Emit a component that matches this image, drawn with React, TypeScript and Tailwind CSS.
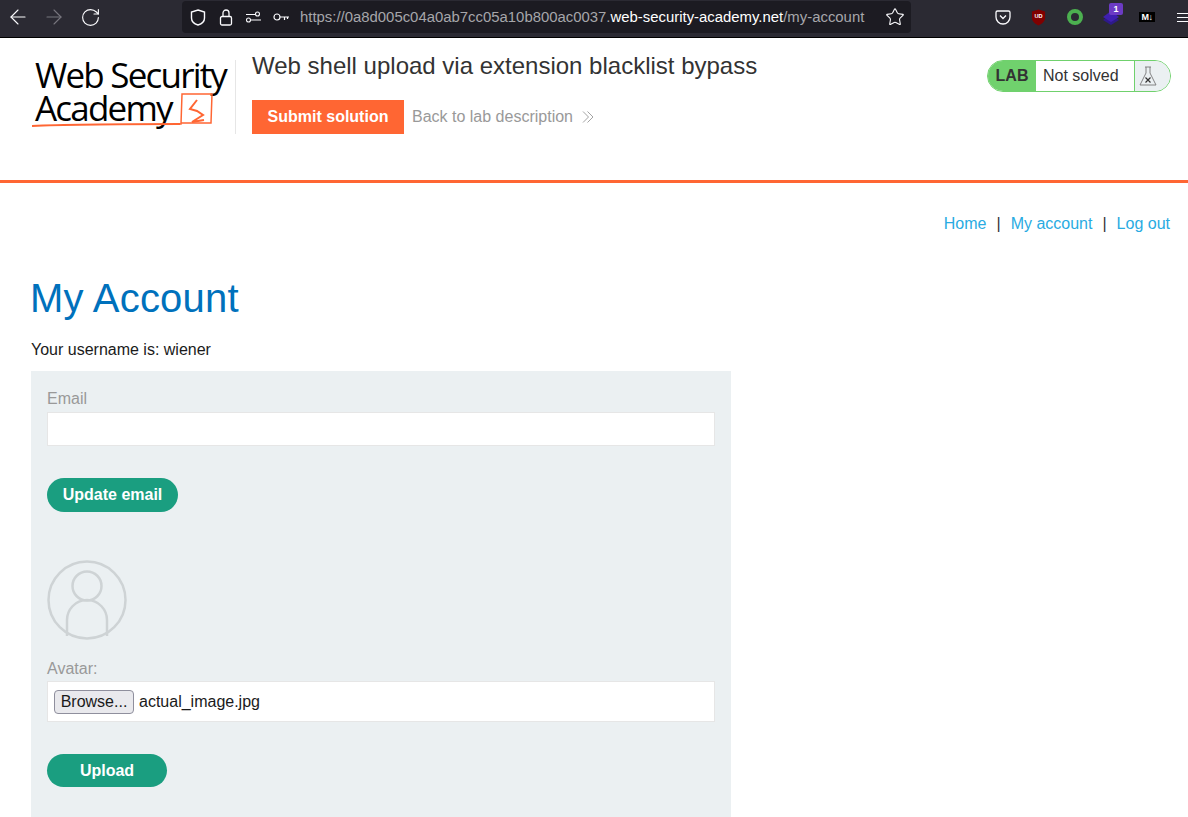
import { ArrowLeft, ArrowRight, RotateCw, Star } from 'lucide-react'

function BrowserBar() {
  return (
    <div className="flex h-[38px] items-center border-b border-black bg-[#2b2a33] pb-[3px]">
      <div className="flex w-[182px] items-center pl-[6px] text-[#fbfbfe]">
        <ArrowLeft size={24} strokeWidth={1.1} />
        <ArrowRight size={24} strokeWidth={1.1} className="ml-[12px] text-[#77767e]" />
        <RotateCw size={21} strokeWidth={1.3} className="ml-[14px]" />
      </div>
      <div className="flex h-[32px] w-[729px] items-center rounded-[4px] bg-[#1c1b22] pl-[8px] text-[#fbfbfe]">
        <svg viewBox="0 0 16 17" className="h-[17px] w-[16px]" fill="none" stroke="currentColor" strokeWidth="1.4">
          <path d="M8 1l6.500 2v6c0 3.500-2.500 5.800-6.500 7-4-1.200-6.500-3.500-6.500-7V3Z" />
        </svg>
        <svg viewBox="0 0 14 17" className="ml-[13px] h-[17px] w-[14px]" fill="none" stroke="currentColor" strokeWidth="1.3">
          <rect x="1.500" y="7.500" width="11" height="8.500" rx="1.500" />
          <path d="M4 7.500V4a3 3 0 0 1 6 0v3.500" />
        </svg>
        <svg viewBox="0 0 15 12" className="ml-[13px] h-[12px] w-[15px]" fill="none" stroke="currentColor" strokeWidth="1.1">
          <path d="M0 3.500h9M4.500 9H15" />
          <circle cx="11.500" cy="3" r="2" />
          <circle cx="2.500" cy="9" r="2" />
        </svg>
        <svg viewBox="0 0 16 10" className="ml-[12px] h-[10px] w-[16px]" fill="none" stroke="currentColor" strokeWidth="1.2">
          <circle cx="4" cy="5" r="3" />
          <path d="M7 5h9M11.500 5v3M14.500 5v2" />
        </svg>
        <div className="ml-[11px] whitespace-nowrap text-[14.9px] text-[#a6a6aa]">
          https://0a8d005c04a0ab7cc05a10b800ac0037.<span className="text-white">web-security-academy.net</span>/my-account
        </div>
        <Star size={20} strokeWidth={1.3} className="ml-auto mr-[6px]" />
      </div>
      <div className="flex flex-1 items-center text-[#fbfbfe]">
        <svg viewBox="0 0 16 16" className="ml-[84px] h-[16px] w-[16px]" fill="none" stroke="currentColor" strokeWidth="1.3">
          <path d="M2.500 2h11A1.500 1.500 0 0 1 15 3.500V8a7 7 0 0 1-14 0V3.500A1.500 1.500 0 0 1 2.500 2Z" />
          <path d="M5 6.500l3 3 3-3" />
        </svg>
        <svg viewBox="0 0 16 17" className="ml-[20px] h-[17px] w-[15px]">
          <path d="M8 0l7 2v7c0 3.500-3 6-7 8-4-2-7-4.500-7-8V2Z" fill="#800000" />
          <text x="8" y="9.500" textAnchor="middle" fontSize="6" fontWeight="700" fill="#fff" fontFamily="Liberation Sans">UD</text>
        </svg>
        <div className="ml-[21px] h-[16px] w-[16px] rounded-full border-[4px] border-[#4cb050]" />
        <div className="relative ml-[20px] h-[16px] w-[16px]">
          <svg viewBox="0 0 16 16" className="h-[16px] w-[16px]">
            <path d="M8 5l8 6-8 5-8-5Z" fill="#2e1a8a" />
            <path d="M8 2l8 6-8 5-8-5Z" fill="#3f1fb0" />
          </svg>
          <span className="absolute left-[6px] top-[-6px] flex h-[12px] w-[14px] items-center justify-center rounded-[2px] bg-[#6c3bc4] text-[9px] font-bold leading-none text-white">
            1
          </span>
        </div>
        <div className="ml-[20px] flex h-[10px] w-[16px] items-center justify-center bg-black text-[9px] font-bold leading-none tracking-[-0.5px] text-white">
          M↓
        </div>
        <div className="ml-[22px] flex w-[11px] shrink-0 flex-col gap-[3px]">
          <div className="h-px bg-[#fbfbfe]" />
          <div className="h-px bg-[#fbfbfe]" />
          <div className="h-px bg-[#fbfbfe]" />
        </div>
      </div>
    </div>
  )
}

function Logo() {
  return (
    <div className="relative h-[74px] w-[204px] font-['Open_Sans',sans-serif] font-medium text-black">
      <div className="mt-[-2px] whitespace-nowrap pl-[4px] text-[35px] leading-[33px] tracking-[-1.8px]">Web Security</div>
      <div className="whitespace-nowrap pl-[4px] text-[35px] leading-[33px] tracking-[-1.8px]">Academy</div>
      <svg viewBox="0 0 204 74" className="absolute left-0 top-0 h-[74px] w-[204px]" fill="none" stroke="#ff6633">
        <path d="M1 68c40-2 90-2 148-2" strokeWidth="2" />
        <path d="M147 66h3l1-30h30l-1 29h-30" strokeWidth="1.500" />
        <path d="M166 42l-7 9 7 2 6 4-11 7 12-2" strokeWidth="2" />
      </svg>
    </div>
  )
}

function LabBadge() {
  return (
    <div className="mt-[22px] flex h-[32px] w-[184px] overflow-hidden rounded-full border border-[#70d16d] text-[16px]">
      <div className="flex w-[48px] items-center justify-center bg-[#70d16d] font-bold text-[#333]">LAB</div>
      <div className="flex flex-1 items-center bg-white pl-[7px] text-[#333]">Not solved</div>
      <div className="flex w-[36px] items-center justify-center border-l border-[#70d16d] bg-[#ebf0f2] pr-[9px]">
        <svg viewBox="0 0 18 20" className="h-[20px] w-[18px]" fill="none" stroke="#777" strokeWidth="0.9">
          <path d="M6 1h6M7 1v6L1 19h16L11 7V1" />
          <path d="M6.500 11.500l5 5M11.500 11.500l-5 5" stroke="#333" strokeWidth="1.200" />
        </svg>
      </div>
    </div>
  )
}

function Header() {
  return (
    <header className="flex h-[145px] items-start justify-between border-b-[3px] border-[#ff6633] pl-[31px] pr-[17px]">
      <div className="flex items-start">
        <div className="mt-[22px] h-[74px] w-[205px] border-r border-[#e6e6e6]">
          <Logo />
        </div>
        <div className="ml-[16px] mt-[13px]">
          <h2 className="text-[24px] leading-[29px] text-[#333]">Web shell upload via extension blacklist bypass</h2>
          <div className="mt-[20px] flex items-center">
            <div className="flex h-[34px] w-[152px] items-center justify-center bg-[#ff6633] font-bold text-white">Submit solution</div>
            <span className="ml-[8px] text-[#999]">Back to lab description</span>
            <svg viewBox="0 0 12 12" className="ml-[9px] h-[12px] w-[12px]" fill="none" stroke="#999" strokeWidth="0.9">
              <path d="M1 .500L6.500 6 1 11.500M5.500 .500L11 6l-5.500 5.500" />
            </svg>
          </div>
        </div>
      </div>
      <LabBadge />
    </header>
  )
}

function GreenButton({ label, size }: { label: string; size: string }) {
  return <div className={`flex items-center justify-center rounded-full bg-[#1a9e80] font-bold text-white ${size}`}>{label}</div>
}

export default function App() {
  return (
    <div className="h-[817px] overflow-hidden bg-white font-['Liberation_Sans',Arial,sans-serif] text-[16px] text-[#1a1a1a]">
      <BrowserBar />
      <Header />
      <nav className="mt-[31px] flex justify-end gap-[10px] pr-[18px] leading-[20px] text-[#333]">
        <span className="text-[#29abe2]">Home</span>
        <span>|</span>
        <span className="text-[#29abe2]">My account</span>
        <span>|</span>
        <span className="text-[#29abe2]">Log out</span>
      </nav>
      <main className="pl-[31px]">
        <h1 className="ml-[-1px] mt-[40px] text-[40px] leading-[48px] tracking-[0.2px] text-[#0071bc]">My Account</h1>
        <p className="mt-[18px] leading-[19px]">Your username is: wiener</p>
        <div className="mt-[12px] h-[500px] w-[700px] bg-[#ebf0f2] px-[16px] pt-[19px]">
          <div className="leading-[18px] text-[#999]">Email</div>
          <div className="mt-[4px] h-[34px] w-[668px] border border-[#e6e6e6] bg-white" />
          <div className="mt-[32px]">
            <GreenButton label="Update email" size="h-[34px] w-[131px]" />
          </div>
          <svg viewBox="0 0 80 80" className="mt-[48px] h-[80px] w-[80px]" fill="none" stroke="#ced3d5" strokeWidth="2.500">
            <circle cx="40" cy="40" r="38.500" />
            <circle cx="40" cy="26" r="14.500" />
            <path d="M20 76V60c0-10 8-20 20-20s20 10 20 20v16" />
          </svg>
          <div className="mt-[20px] leading-[18px] text-[#999]">Avatar:</div>
          <div className="mt-[3px] flex h-[41px] w-[668px] items-center border border-[#e6e6e6] bg-white pl-[6px]">
            <div className="flex h-[24px] w-[80px] items-center justify-center rounded-[4px] border border-[#8f8f9d] bg-[#e9e9ed]">Browse...</div>
            <span className="ml-[5px]">actual_image.jpg</span>
          </div>
          <div className="mt-[32px]">
            <GreenButton label="Upload" size="h-[33px] w-[120px]" />
          </div>
        </div>
      </main>
    </div>
  )
}
